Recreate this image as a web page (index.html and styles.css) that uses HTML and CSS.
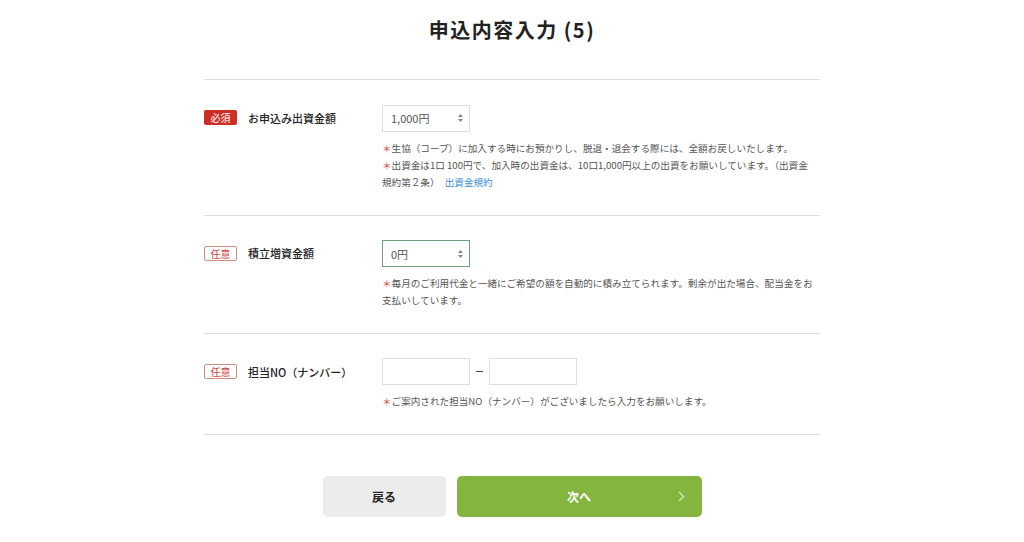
FILE: index.html
```html
<!DOCTYPE html>
<html lang="ja">
<head>
    <meta charset="UTF-8">
    <meta name="viewport" content="width=device-width, initial-scale=1.0">
    <title>申込内容入力 (5)</title>
    <link rel="stylesheet" href="styles.css">
</head>
<body>

    <h1 class="page-title">申込内容入力 (5)</h1>

    <form action="#" method="post" class="entry-form">

        <div class="form-row">
            <div class="form-label">
                <span class="badge badge-required">必須</span>
                <label for="investment">お申込み出資金額</label>
            </div>
            <div class="form-field">
                <div class="select-wrap">
                    <select id="investment" name="investment">
                        <option value="1000">1,000円</option>
                        <option value="2000">2,000円</option>
                        <option value="3000">3,000円</option>
                    </select>
                    <svg class="select-arrow" width="5" height="8" viewBox="0 0 5 8"><path d="M2.5 0 L5 3 L0 3 Z M2.5 8 L5 5 L0 5 Z" fill="#888"/></svg>
                </div>
                <p class="note"><span class="mark">＊</span>生協（コープ）に加入する時にお預かりし、脱退・退会する際には、全額お戻しいたします。</p>
                <p class="note note-tight"><span class="mark">＊</span>出資金は1口 100円で、加入時の出資金は、10口1,000円以上の出資をお願いしています。（出資金規約第２条） <a href="#" class="note-link">出資金規約</a></p>
            </div>
        </div>

        <div class="form-row">
            <div class="form-label">
                <span class="badge badge-optional">任意</span>
                <label for="savings">積立増資金額</label>
            </div>
            <div class="form-field">
                <div class="select-wrap">
                    <select id="savings" name="savings" class="select-focus">
                        <option value="0">0円</option>
                        <option value="500">500円</option>
                        <option value="1000">1,000円</option>
                    </select>
                    <svg class="select-arrow" width="5" height="8" viewBox="0 0 5 8"><path d="M2.5 0 L5 3 L0 3 Z M2.5 8 L5 5 L0 5 Z" fill="#888"/></svg>
                </div>
                <p class="note"><span class="mark">＊</span>毎月のご利用代金と一緒にご希望の額を自動的に積み立てられます。剰余が出た場合、配当金をお支払いしています。</p>
            </div>
        </div>

        <div class="form-row">
            <div class="form-label">
                <span class="badge badge-optional">任意</span>
                <label for="staffNo1">担当NO（ナンバー）</label>
            </div>
            <div class="form-field">
                <div class="input-pair">
                    <input type="text" id="staffNo1" name="staffNo1">
                    <span class="dash"></span>
                    <input type="text" id="staffNo2" name="staffNo2">
                </div>
                <p class="note"><span class="mark">＊</span>ご案内された担当NO（ナンバー）がございましたら入力をお願いします。</p>
            </div>
        </div>

        <div class="actions">
            <button type="button" class="btn-back">戻る</button>
            <button type="submit" class="btn-next">
                次へ
                <svg class="chevron" width="7" height="11" viewBox="0 0 7 11"><polyline points="1,1 5.5,5.5 1,10" fill="none" stroke="#d6e8bd" stroke-width="1.4"/></svg>
            </button>
        </div>

    </form>

</body>
</html>
```

FILE: styles.css
```css
body {
    margin: 0;
    font-family: "Noto Sans CJK JP", "Noto Sans", sans-serif;
    color: #222;
    background: #fff;
}

.page-title {
    margin: 16px 0 35px;
    font-size: 20px;
    line-height: 28px;
    font-weight: bold;
    letter-spacing: 1.5px;
    text-align: center;
}

.entry-form {
    width: 616px;
    margin: 0 auto;
    border-top: 1px solid #ddd;
}

.form-row {
    display: grid;
    grid-template-columns: 178px 1fr;
    padding: 24px 0 24px;
    border-bottom: 1px solid #ddd;
}

.form-label {
    display: flex;
    align-items: center;
    height: 27px;
    font-size: 11px;
    font-weight: 500;
    color: #222;
}

.badge {
    display: inline-block;
    box-sizing: border-box;
    width: 33px;
    height: 15px;
    margin-right: 11px;
    border-radius: 2px;
    font-size: 10px;
    line-height: 15px;
    font-weight: normal;
    text-align: center;
}

.badge-required {
    background-color: #cf2e25;
    color: #fff;
}

.badge-optional {
    border: 1px solid #d58a84;
    color: #c9453c;
    line-height: 13px;
}

.select-wrap {
    position: relative;
    width: 88px;
}

select {
    -webkit-appearance: none;
    appearance: none;
    width: 88px;
    height: 27px;
    padding: 0 8px;
    box-sizing: border-box;
    border: 1px solid #ddd;
    border-radius: 0;
    background: #fff;
    font-family: inherit;
    font-size: 11px;
    color: #555;
}

.select-focus {
    border-color: #6f9f7c;
}

.select-arrow {
    position: absolute;
    right: 7px;
    top: 10px;
}

.input-pair {
    display: flex;
    align-items: center;
    gap: 6px;
}

input {
    width: 88px;
    height: 27px;
    box-sizing: border-box;
    border: 1px solid #ddd;
    padding: 0 6px;
    font-family: inherit;
}

.dash {
    width: 7px;
    height: 1px;
    background-color: #444;
}

.note {
    margin: 8px 0 0;
    font-size: 9.6px;
    line-height: 17px;
    color: #555;
}

.note-tight {
    margin-top: 0;
    padding-right: 6px;
}

.mark {
    color: #d9463f;
}

.note-link {
    color: #3b8fd8;
    text-decoration: none;
    margin-left: 3px;
}

.actions {
    display: flex;
    justify-content: center;
    gap: 11px;
    padding-top: 41px;
}

button {
    height: 41px;
    border: none;
    border-radius: 5px;
    font-family: inherit;
    font-size: 12px;
    font-weight: bold;
    cursor: pointer;
}

.btn-back {
    width: 123px;
    background-color: #ececec;
    color: #222;
}

.btn-next {
    position: relative;
    width: 245px;
    background-color: #84b53f;
    color: #fff;
}

.chevron {
    position: absolute;
    right: 17px;
    top: 15px;
}
```
